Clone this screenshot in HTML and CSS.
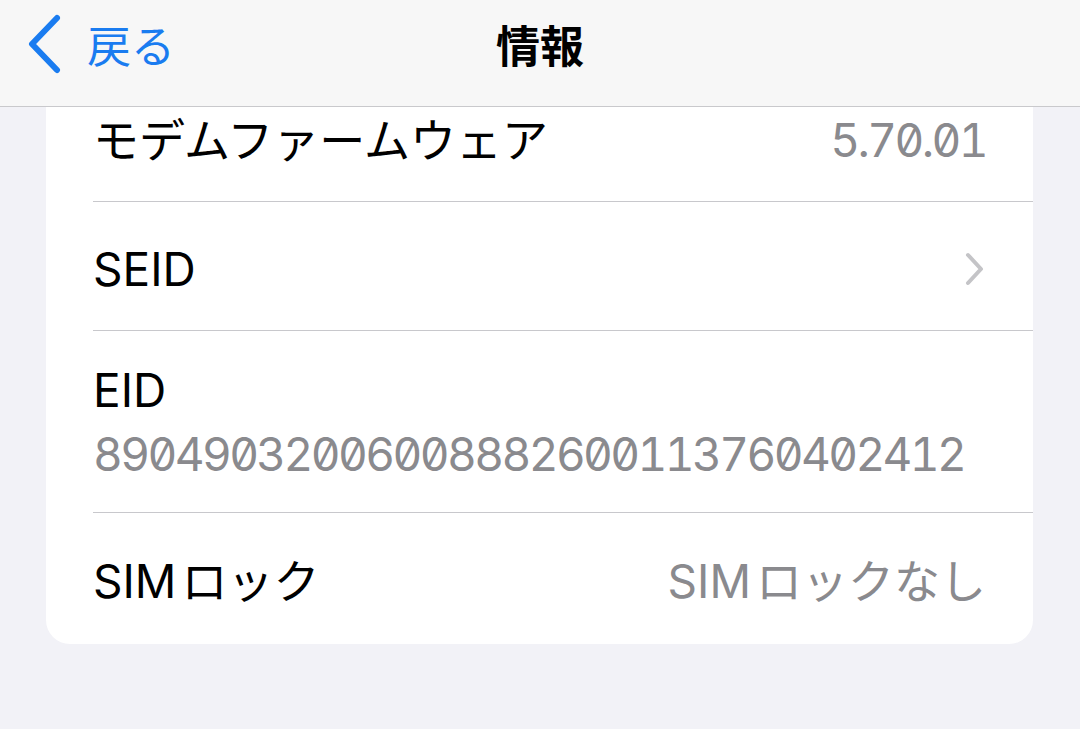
FILE: index.html
```html
<!DOCTYPE html>
<html lang="ja">
<head>
  <meta charset="UTF-8" />
  <meta name="viewport" content="width=device-width, initial-scale=1.0"/>
  <title>情報</title>
  <link rel="stylesheet" href="styles.css">
</head>
<body>

  <!-- ナビゲーションバー -->
  <header class="navbar">
    <a class="back" href="#">
      <svg class="back-icon" viewBox="0 0 36 60" width="36" height="60">
        <path d="M31 4 L6 30 L31 56" fill="none" stroke="#1a7cf0" stroke-width="6" stroke-linecap="round" stroke-linejoin="round"/>
      </svg>
      <span>戻る</span>
    </a>
    <h1 class="nav-title">情報</h1>
    <div></div>
  </header>

  <main class="page">
    <section class="card">
      <div class="row">
        <div class="row-inner">
          <span class="label">モデムファームウェア</span>
          <span class="value num">5.70.01</span>
        </div>
      </div>

      <div class="row">
        <div class="row-inner">
          <span class="label">SEID</span>
          <svg class="chevron" viewBox="0 0 22 36" width="22" height="36">
            <path d="M4 4 L17 18 L4 32" fill="none" stroke="#c4c4c7" stroke-width="4" stroke-linecap="round" stroke-linejoin="round"/>
          </svg>
        </div>
      </div>

      <div class="row">
        <div class="row-inner stacked">
          <span class="label">EID</span>
          <span class="value num">89049032006008882600113760402412</span>
        </div>
      </div>

      <div class="row">
        <div class="row-inner last">
          <span class="label"><span class="latin">SIM</span>ロック</span>
          <span class="value"><span class="latin">SIM</span>ロックなし</span>
        </div>
      </div>
    </section>
  </main>

</body>
</html>
```

FILE: styles.css
```css
body {
  font-family: 'Inter', 'Noto Sans CJK JP', sans-serif;
  margin: 0;
  padding: 0;
  background-color: #f2f2f7;
  height: 729px;
  overflow: hidden;
}

.navbar {
  display: grid;
  grid-template-columns: 1fr auto 1fr;
  align-items: center;
  height: 87px;
  padding-bottom: 19px;
  background-color: #f7f7f7;
  border-bottom: 1px solid #c9c9cc;
  position: relative;
  z-index: 2;
}

.back {
  display: flex;
  align-items: center;
  gap: 25px;
  padding-left: 26px;
  color: #1a7cf0;
  text-decoration: none;
  font-size: 44px;
}

.back-icon {
  display: block;
}

.nav-title {
  margin: 0;
  font-size: 44px;
  font-weight: 700;
  color: #000;
}

.page {
  padding: 0 47px 0 46px;
  overflow: hidden;
}

.card {
  background-color: #fff;
  border-radius: 24px;
  margin-top: -34px;
}

.row {
  padding-left: 47px;
}

.row-inner {
  box-sizing: border-box;
  display: flex;
  align-items: center;
  justify-content: space-between;
  min-height: 129px;
  padding-top: 5px;
  padding-right: 47px;
  border-bottom: 1px solid #c8c8cc;
}

.row-inner.last {
  border-bottom: none;
  min-height: 131px;
}

.row-inner.stacked {
  flex-direction: column;
  align-items: flex-start;
  justify-content: center;
  min-height: 182px;
  padding-top: 0;
  gap: 8px;
}

.label {
  font-size: 46px;
  color: #000;
  line-height: 56px;
}

.value {
  font-size: 46px;
  color: #8a8a8e;
  line-height: 56px;
}

.num {
  font-variant-numeric: tabular-nums slashed-zero;
  letter-spacing: -2.6px;
}

.latin {
  margin-right: 5px;
}

.chevron {
  display: block;
}
```
